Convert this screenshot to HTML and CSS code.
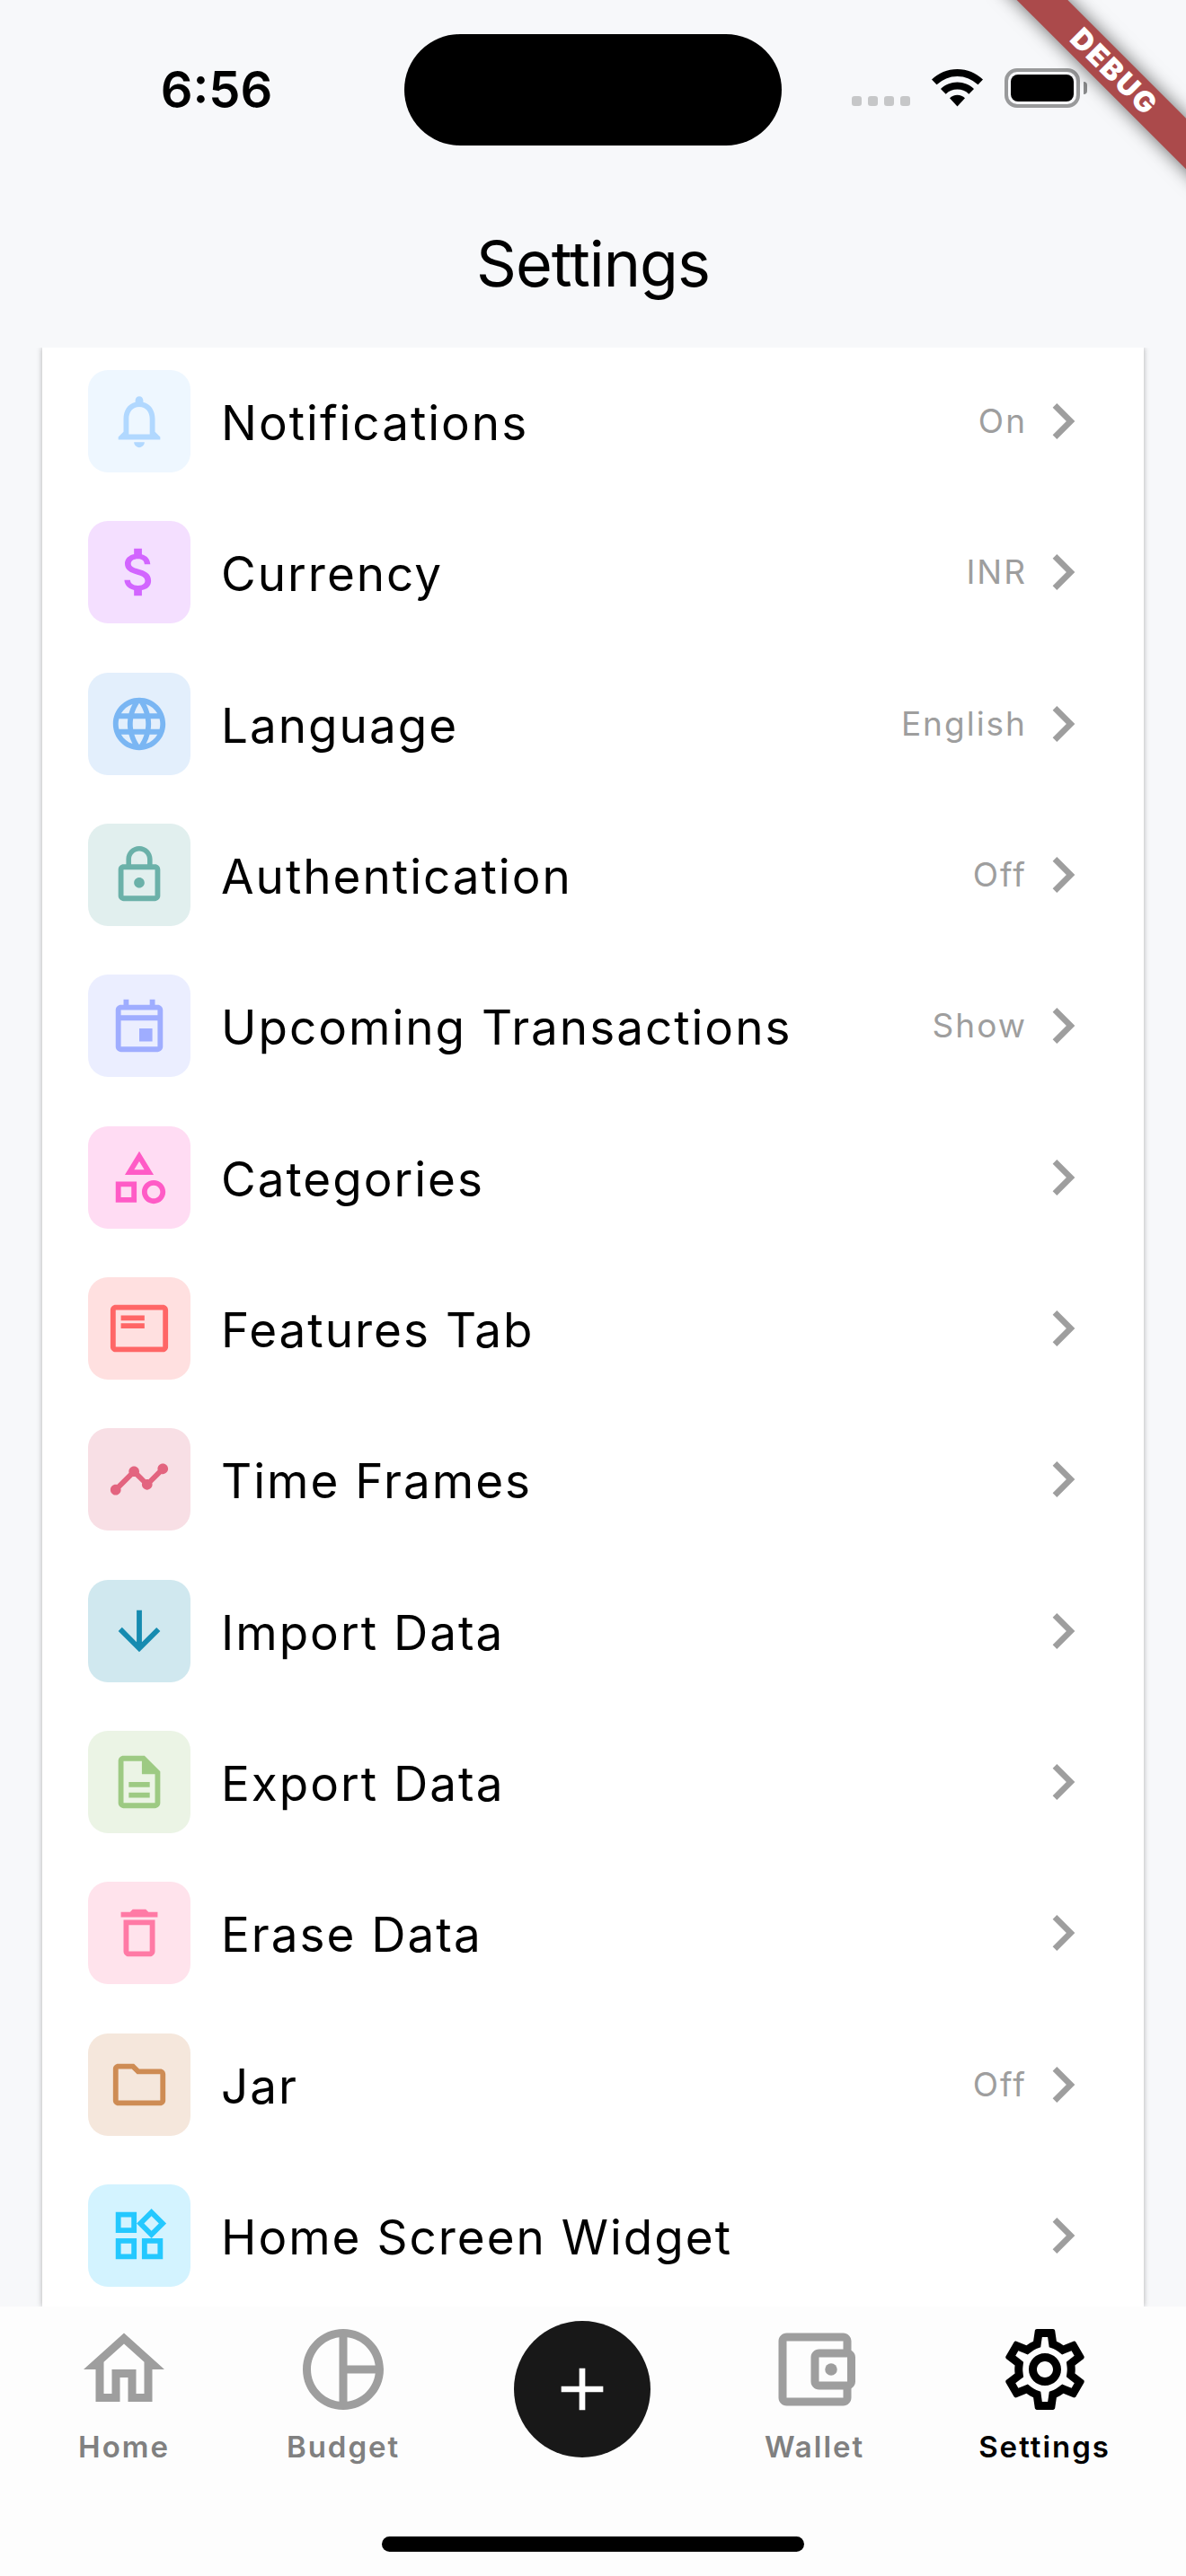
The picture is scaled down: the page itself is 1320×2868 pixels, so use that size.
FILE: index.html
```html
<!DOCTYPE html>
<html lang="en">
<head>
<meta charset="utf-8">
<meta name="viewport" content="width=device-width, initial-scale=1">
<title>Settings</title>
<link rel="stylesheet" href="styles.css">
</head>
<body>
<div class="screen">
  <div class="status-bar">
    <div class="status-side"><time class="clock">6:56</time></div>
    <div class="island"></div>
    <div class="status-side status-icons">
      <div class="signal"><i></i><i></i><i></i><i></i></div>
      <svg class="wifi" viewBox="0 0 57 42" aria-hidden="true">
        <path d="M28.500 0C39.500 0 49.500 4.300 57 11.500L51.500 17.300A33 33 0 0 0 5.500 17.300L0 11.500C7.500 4.300 17.500 0 28.500 0Z"/>
        <path d="M28.500 14.500C35.600 14.500 42.100 17.300 47 21.900L41.300 27.700A18.600 18.600 0 0 0 15.700 27.700L10 21.900C14.900 17.300 21.400 14.500 28.500 14.500Z"/>
        <path d="M28.500 28.700C31.800 28.700 34.800 30 37 32.200L28.500 41.500L20 32.200C22.200 30 25.200 28.700 28.500 28.700Z"/>
      </svg>
      <div class="battery"><div class="battery-body"><div class="battery-level"></div></div><div class="battery-cap"></div></div>
    </div>
  </div>

  <header class="title-bar"><h1>Settings</h1></header>

  <main class="content">
    <ul class="card">
      <li><a class="row" href="#notifications">
        <span class="tile bell"><svg viewBox="0 0 24 24"><path d="M12 22c1.100 0 2-.9 2-2h-4c0 1.100.89 2 2 2zm6-6v-5c0-3.070-1.640-5.640-4.500-6.320V4c0-.83-.67-1.500-1.500-1.500s-1.500.67-1.500 1.500v.68C7.630 5.360 6 7.920 6 11v5l-2 2v1h16v-1l-2-2zm-2 1H8v-6c0-2.480 1.510-4.500 4-4.500s4 2.020 4 4.500v6z"/></svg></span>
        <span class="label">Notifications</span><span class="value">On</span>
        <svg class="chevron" viewBox="0 0 24 24"><path d="M10 6L8.590 7.410 13.170 12l-4.580 4.590L10 18l6-6z"/></svg></a></li>
      <li><a class="row" href="#currency">
        <span class="tile money"><svg viewBox="0 0 24 24"><path d="M11.800 10.900c-2.270-.59-3-1.200-3-2.150 0-1.090 1.010-1.850 2.700-1.850 1.780 0 2.440.85 2.500 2.100h2.210c-.07-1.720-1.120-3.300-3.210-3.810V3h-3v2.160c-1.940.42-3.500 1.680-3.500 3.610 0 2.310 1.910 3.460 4.700 4.130 2.500.6 3 1.480 3 2.410 0 .69-.49 1.790-2.700 1.790-2.060 0-2.870-.92-2.980-2.100h-2.200c.12 2.190 1.760 3.420 3.680 3.830V21h3v-2.150c1.950-.37 3.500-1.500 3.500-3.550 0-2.840-2.430-3.810-4.700-4.400z"/></svg></span>
        <span class="label">Currency</span><span class="value">INR</span>
        <svg class="chevron" viewBox="0 0 24 24"><path d="M10 6L8.590 7.410 13.170 12l-4.580 4.590L10 18l6-6z"/></svg></a></li>
      <li><a class="row" href="#language">
        <span class="tile globe"><svg viewBox="0 0 24 24"><path d="M11.990 2C6.470 2 2 6.480 2 12s4.470 10 9.990 10C17.520 22 22 17.520 22 12S17.520 2 11.990 2zm6.930 6h-2.950c-.32-1.250-.78-2.450-1.380-3.560 1.840.63 3.370 1.910 4.330 3.560zM12 4.040c.83 1.200 1.480 2.530 1.910 3.960h-3.820c.43-1.430 1.080-2.760 1.910-3.960zM4.260 14C4.100 13.360 4 12.690 4 12s.1-1.360.26-2h3.380c-.08.66-.14 1.320-.14 2 0 .68.06 1.340.14 2H4.260zm.82 2h2.950c.32 1.250.78 2.450 1.380 3.560-1.840-.63-3.370-1.900-4.330-3.560zm2.950-8H5.080c.96-1.660 2.490-2.930 4.330-3.560C8.810 5.550 8.350 6.750 8.030 8zM12 19.960c-.83-1.200-1.480-2.530-1.910-3.960h3.820c-.43 1.430-1.080 2.760-1.910 3.960zM14.340 14H9.660c-.09-.66-.16-1.320-.16-2 0-.68.07-1.350.16-2h4.680c.09.65.16 1.320.16 2 0 .68-.07 1.340-.16 2zm.25 5.560c.6-1.110 1.060-2.310 1.380-3.560h2.950c-.96 1.650-2.490 2.930-4.330 3.560zM16.360 14c.08-.66.14-1.320.14-2 0-.68-.06-1.340-.14-2h3.380c.16.64.26 1.310.26 2s-.1 1.360-.26 2h-3.380z"/></svg></span>
        <span class="label">Language</span><span class="value">English</span>
        <svg class="chevron" viewBox="0 0 24 24"><path d="M10 6L8.590 7.410 13.170 12l-4.580 4.590L10 18l6-6z"/></svg></a></li>
      <li><a class="row" href="#authentication">
        <span class="tile lock"><svg viewBox="0 0 24 24"><path d="M12 17c1.100 0 2-.9 2-2s-.9-2-2-2-2 .9-2 2 .9 2 2 2zm6-9h-1V6c0-2.760-2.240-5-5-5S7 3.240 7 6v2H6c-1.100 0-2 .9-2 2v10c0 1.100.9 2 2 2h12c1.100 0 2-.9 2-2V10c0-1.100-.9-2-2-2zM8.900 6c0-1.710 1.390-3.100 3.100-3.100s3.100 1.390 3.100 3.100v2H8.900V6zM18 20H6V10h12v10z"/></svg></span>
        <span class="label">Authentication</span><span class="value">Off</span>
        <svg class="chevron" viewBox="0 0 24 24"><path d="M10 6L8.590 7.410 13.170 12l-4.580 4.590L10 18l6-6z"/></svg></a></li>
      <li><a class="row" href="#upcoming">
        <span class="tile calendar"><svg viewBox="0 0 24 24"><path fill-rule="evenodd" d="M6 2h2v2h8V2h2v2h1c1.100 0 2 .9 2 2v14c0 1.100-.9 2-2 2H5c-1.100 0-2-.9-2-2V6c0-1.100.9-2 2-2h1V2zM5 6v2h14V6H5zM5 10v10h14V10H5zM12 13h5v5h-5z"/></svg></span>
        <span class="label">Upcoming Transactions</span><span class="value">Show</span>
        <svg class="chevron" viewBox="0 0 24 24"><path d="M10 6L8.590 7.410 13.170 12l-4.580 4.590L10 18l6-6z"/></svg></a></li>
      <li><a class="row" href="#categories">
        <span class="tile shapes"><svg viewBox="0 0 24 24"><path d="M12 2l-5.500 9h11L12 2zm0 3.840L13.930 9h-3.870L12 5.840zM17.500 13c-2.490 0-4.500 2.010-4.500 4.500s2.010 4.500 4.500 4.500 4.500-2.010 4.500-4.500-2.010-4.500-4.500-4.500zm0 7c-1.380 0-2.500-1.120-2.500-2.500s1.120-2.500 2.500-2.500 2.500 1.120 2.500 2.500-1.120 2.500-2.500 2.500zM3 21.500h8v-8H3v8zm2-6h4v4H5v-4z"/></svg></span>
        <span class="label">Categories</span>
        <svg class="chevron" viewBox="0 0 24 24"><path d="M10 6L8.590 7.410 13.170 12l-4.580 4.590L10 18l6-6z"/></svg></a></li>
      <li><a class="row" href="#features">
        <span class="tile features"><svg viewBox="0 0 24 24"><path d="M21 3H3c-1.100 0-2 .9-2 2v14c0 1.100.9 2 2 2h18c1.100 0 2-.9 2-2V5c0-1.100-.9-2-2-2zm0 16H3V5h18v14zM5 10h9v2H5zm0-3h9v2H5z"/></svg></span>
        <span class="label">Features Tab</span>
        <svg class="chevron" viewBox="0 0 24 24"><path d="M10 6L8.590 7.410 13.170 12l-4.580 4.590L10 18l6-6z"/></svg></a></li>
      <li><a class="row" href="#time-frames">
        <span class="tile timeline"><svg viewBox="0 0 24 24"><path d="M23 8c0 1.100-.9 2-2 2-.18 0-.35-.02-.51-.07l-3.560 3.550c.05.16.07.34.07.52 0 1.100-.9 2-2 2s-2-.9-2-2c0-.18.02-.36.07-.52l-2.550-2.550c-.16.05-.34.07-.52.07s-.36-.02-.52-.07l-4.550 4.560c.05.16.07.33.07.51 0 1.100-.9 2-2 2s-2-.9-2-2 .9-2 2-2c.18 0 .35.02.51.07l4.560-4.550C8.020 9.360 8 9.180 8 9c0-1.100.9-2 2-2s2 .9 2 2c0 .18-.02.36-.07.52l2.550 2.550c.16-.05.34-.07.52-.07s.36.02.52.07l3.550-3.560C19.020 8.350 19 8.180 19 8c0-1.100.9-2 2-2s2 .9 2 2z"/></svg></span>
        <span class="label">Time Frames</span>
        <svg class="chevron" viewBox="0 0 24 24"><path d="M10 6L8.590 7.410 13.170 12l-4.580 4.590L10 18l6-6z"/></svg></a></li>
      <li><a class="row" href="#import">
        <span class="tile import"><svg viewBox="0 0 24 24"><path d="M20 12l-1.410-1.410L13 16.170V4h-2v12.170l-5.580-5.590L4 12l8 8 8-8z"/></svg></span>
        <span class="label">Import Data</span>
        <svg class="chevron" viewBox="0 0 24 24"><path d="M10 6L8.590 7.410 13.170 12l-4.580 4.590L10 18l6-6z"/></svg></a></li>
      <li><a class="row" href="#export">
        <span class="tile export"><svg viewBox="0 0 24 24"><path d="M8 16h8v2H8zm0-4h8v2H8zm6-10H6c-1.100 0-2 .9-2 2v16c0 1.100.89 2 1.990 2H18c1.100 0 2-.9 2-2V8l-6-6zm4 18H6V4h7v5h5v11z"/></svg></span>
        <span class="label">Export Data</span>
        <svg class="chevron" viewBox="0 0 24 24"><path d="M10 6L8.590 7.410 13.170 12l-4.580 4.590L10 18l6-6z"/></svg></a></li>
      <li><a class="row" href="#erase">
        <span class="tile erase"><svg viewBox="0 0 24 24"><path d="M6 19c0 1.100.9 2 2 2h8c1.100 0 2-.9 2-2V7H6v12zM8 9h8v10H8V9zm7.500-5l-1-1h-5l-1 1H5v2h14V4z"/></svg></span>
        <span class="label">Erase Data</span>
        <svg class="chevron" viewBox="0 0 24 24"><path d="M10 6L8.590 7.410 13.170 12l-4.580 4.590L10 18l6-6z"/></svg></a></li>
      <li><a class="row" href="#jar">
        <span class="tile jar"><svg viewBox="0 0 24 24"><path d="M9.170 6l2 2H20v10H4V6h5.170M10 4H4c-1.100 0-1.990.9-1.990 2L2 18c0 1.100.9 2 2 2h16c1.100 0 2-.9 2-2V8c0-1.100-.9-2-2-2h-8l-2-2z"/></svg></span>
        <span class="label">Jar</span><span class="value">Off</span>
        <svg class="chevron" viewBox="0 0 24 24"><path d="M10 6L8.590 7.410 13.170 12l-4.580 4.590L10 18l6-6z"/></svg></a></li>
      <li><a class="row" href="#widget">
        <span class="tile widget"><svg viewBox="0 0 24 24"><path d="M16.660 4.520l2.830 2.830-2.830 2.830-2.830-2.830 2.830-2.830M9 5v4H5V5h4m10 10v4h-4v-4h4M9 15v4H5v-4h4m7.660-13.310L11 7.340 16.660 13l5.660-5.660-5.660-5.650zM11 3H3v8h8V3zm10 10h-8v8h8v-8zm-10 0H3v8h8v-8z"/></svg></span>
        <span class="label">Home Screen Widget</span>
        <svg class="chevron" viewBox="0 0 24 24"><path d="M10 6L8.590 7.410 13.170 12l-4.580 4.590L10 18l6-6z"/></svg></a></li>
    </ul>
  </main>

  <nav class="tab-bar">
    <div class="tabs">
      <a class="tab" href="#home"><svg viewBox="0 0 24 24"><path d="M12 5.690l5 4.500V18h-2v-6H9v6H7v-7.810l5-4.500M12 3L2 12h3v8h6v-6h2v6h6v-8h3L12 3z"/></svg><span>Home</span></a>
      <a class="tab" href="#budget"><svg viewBox="0 0 24 24"><path d="M12 2C6.480 2 2 6.480 2 12s4.480 10 10 10 10-4.480 10-10S17.520 2 12 2zm1 2.070c3.610.45 6.480 3.330 6.930 6.930H13V4.070zM4 12c0-4.060 3.070-7.440 7-7.930v15.870c-3.930-.5-7-3.880-7-7.940zm9 7.930V13h6.930c-.45 3.610-3.320 6.480-6.930 6.930z"/></svg><span>Budget</span></a>
      <button class="add" type="button" aria-label="Add"><svg viewBox="0 0 24 24"><path d="M19 13h-6v6h-2v-6H5v-2h6V5h2v6h6v2z"/></svg></button>
      <a class="tab" href="#wallet"><svg viewBox="0 0 24 24"><path d="M21 7.280V5c0-1.100-.9-2-2-2H5c-1.110 0-2 .9-2 2v14c0 1.100.89 2 2 2h14c1.100 0 2-.9 2-2v-2.280c.59-.35 1-.98 1-1.720V9c0-.74-.41-1.370-1-1.720zM20 9v6h-7V9h7zM5 19V5h14v2h-6c-1.100 0-2 .9-2 2v6c0 1.100.9 2 2 2h6v2H5z"/><circle cx="16" cy="12" r="1.500"/></svg><span>Wallet</span></a>
      <a class="tab active" href="#settings" aria-current="page"><svg viewBox="0 0 24 24"><path d="M19.430 12.980c.04-.32.07-.64.07-.98 0-.34-.03-.66-.07-.98l2.110-1.650c.19-.15.24-.42.12-.64l-2-3.460c-.09-.16-.26-.25-.44-.25-.06 0-.12.01-.17.03l-2.490 1c-.52-.4-1.080-.73-1.690-.98l-.38-2.650C14.460 2.180 14.250 2 14 2h-4c-.25 0-.46.18-.49.42l-.38 2.650c-.61.25-1.170.59-1.690.98l-2.490-1c-.06-.02-.12-.03-.18-.03-.17 0-.34.09-.43.25l-2 3.460c-.13.22-.07.49.12.64l2.110 1.650c-.04.32-.07.65-.07.98 0 .33.03.66.07.98l-2.110 1.650c-.19.15-.24.42-.12.64l2 3.460c.09.16.26.25.44.25.06 0 .12-.01.17-.03l2.490-1c.52.4 1.080.73 1.690.98l.38 2.650c.03.24.24.42.49.42h4c.25 0 .46-.18.49-.42l.38-2.650c.61-.25 1.170-.59 1.690-.98l2.490 1c.06.02.12.03.18.03.17 0 .34-.09.43-.25l2-3.460c.12-.22.07-.49-.12-.64l-2.110-1.650zm-1.980-1.710c.04.31.05.52.05.73 0 .21-.02.43-.05.73l-.14 1.130.89.7 1.080.84-.7 1.210-1.270-.51-1.040-.42-.9.68c-.43.32-.84.56-1.250.73l-1.060.43-.16 1.130-.2 1.350h-1.400l-.19-1.350-.16-1.130-1.060-.43c-.43-.18-.83-.41-1.230-.71l-.91-.7-1.060.43-1.270.51-.7-1.210 1.080-.84.89-.7-.14-1.130c-.03-.31-.05-.54-.05-.74s.02-.43.05-.73l.14-1.130-.89-.7-1.080-.84.7-1.210 1.270.51 1.040.42.9-.68c.43-.32.84-.56 1.250-.73l1.060-.43.16-1.130.2-1.350h1.390l.19 1.350.16 1.130 1.060.43c.43.18.83.41 1.230.71l.91.7 1.060-.43 1.270-.51.7 1.210-1.070.85-.89.7.14 1.130zM12 8c-2.210 0-4 1.790-4 4s1.790 4 4 4 4-1.790 4-4-1.790-4-4-4zm0 6c-1.100 0-2-.9-2-2s.9-2 2-2 2 .9 2 2-.9 2-2 2z"/></svg><span>Settings</span></a>
    </div>
    <div class="home-indicator"></div>
  </nav>

  <div class="debug-corner"><div class="debug-banner">DEBUG</div></div>
</div>
</body>
</html>
```
FILE: styles.css
```css
* { box-sizing: border-box; }

body {
  margin: 0;
  background: #f7f8fa;
  color: #000;
  font-family: Inter, "Liberation Sans", sans-serif;
}

a { color: inherit; text-decoration: none; }
svg { display: block; fill: currentColor; }

.screen {
  position: relative;
  display: flex;
  flex-direction: column;
  min-height: 100vh;
}

/* Status bar */
.status-bar {
  display: grid;
  grid-template-columns: 1fr 420px 1fr;
  align-items: center;
  padding-top: 38px;
}
.status-side { display: flex; align-items: center; justify-content: center; }
.clock {
  font-size: 56px;
  line-height: 64px;
  font-weight: 600;
  padding-left: 32px;
}
.island { height: 124px; border-radius: 62px; background: #000; }
.status-icons { justify-content: flex-end; gap: 24px; padding: 0 110px 4px 0; }
.signal { display: flex; gap: 7px; align-self: flex-end; padding-bottom: 2px; }
.signal i { width: 11px; height: 11px; border-radius: 3px; background: #c6c7c8; }
.wifi { width: 57px; height: 42px; }
.battery { display: flex; align-items: center; gap: 4px; }
.battery-body {
  width: 84px;
  height: 44px;
  padding: 3px;
  border: 4px solid #999a9b;
  border-radius: 14px;
}
.battery-level { height: 100%; border-radius: 8px; background: #000; }
.battery-cap { width: 4px; height: 14px; border-radius: 0 4px 4px 0; background: #8b8c8d; }

/* Title */
.title-bar { padding: 84px 0 45px; text-align: center; }
h1 { margin: 0; font-size: 70px; line-height: 96px; font-weight: 400; letter-spacing: -1px; }

/* Settings list */
.content {
  flex: 1;
  display: flex;
  padding: 0 47px;
  overflow: hidden;
}
.card {
  flex: 1;
  display: flex;
  flex-direction: column;
  justify-content: space-between;
  gap: 16px;
  margin: 0;
  padding: 25px 50px 22px 51px;
  list-style: none;
  background: #fff;
  box-shadow: 0 0 6px rgba(0, 0, 0, .3);
}
.row { display: flex; align-items: center; }
.tile {
  display: grid;
  place-items: center;
  width: 114px;
  height: 114px;
  margin-right: 34px;
  border-radius: 22px;
}
.tile svg { width: 70px; height: 70px; }
.label { flex: 1; padding-top: 4px; font-size: 53px; line-height: 64px; letter-spacing: 2px; }
.value { font-size: 37px; line-height: 44px; letter-spacing: 2px; color: #9e9e9e; }
.chevron { width: 80px; height: 80px; color: #9e9e9e; }

.bell { background: #eef7ff; color: #b1d8ff; }
.money { background: #f4dfff; color: #d265ff; }
.globe { background: #e3effc; color: #7ab6f3; }
.lock { background: #e1efee; color: #6bb1a9; }
.calendar { background: #ebeeff; color: #9fadff; }
.shapes { background: #ffdcf3; color: #ff5bc6; }
.features { background: #ffe0e0; color: #ff6666; }
.timeline { background: #f8dfe5; color: #e3647f; }
.import { background: #d0e8ef; color: #168bb0; }
.export { background: #ebf4e5; color: #9dca83; }
.erase { background: #ffe3ec; color: #ff7aa5; }
.jar { background: #f5e7dc; color: #ce8c54; }
.widget { background: #d3f3ff; color: #24c8ff; }

/* Bottom navigation */
.tab-bar {
  display: flex;
  flex-direction: column;
  align-items: center;
  gap: 72px;
  padding: 16px 84px 27px;
  background: #fdfdfd;
}
.tabs { display: flex; align-self: stretch; justify-content: space-between; height: 168px; }
.tab {
  display: flex;
  flex-direction: column;
  align-items: center;
  gap: 12px;
  font-size: 33px;
  line-height: 40px;
  font-weight: 600;
  letter-spacing: 2px;
  color: #808080;
}
.tab svg { width: 108px; height: 108px; color: #9e9e9e; }
.tab.active, .tab.active svg { color: #000; }
.add {
  display: grid;
  place-items: center;
  width: 152px;
  height: 152px;
  padding: 0;
  border: 0;
  border-radius: 50%;
  background: #181818;
  color: #fff;
}
.add svg { width: 80px; height: 80px; }
.home-indicator { width: 470px; height: 17px; border-radius: 9px; background: #000; }

/* Corner ribbon */
.debug-corner {
  position: absolute;
  top: 0;
  right: 0;
  width: 260px;
  height: 260px;
  overflow: hidden;
  pointer-events: none;
}
.debug-banner {
  position: absolute;
  top: 60px;
  left: 20px;
  width: 320px;
  transform: rotate(45deg);
  background: #ab4a4b;
  box-shadow: 0 0 20px rgba(0, 0, 0, .6);
  color: #fff;
  font-size: 32px;
  line-height: 40px;
  font-weight: 900;
  letter-spacing: 2px;
  text-align: center;
}
```
